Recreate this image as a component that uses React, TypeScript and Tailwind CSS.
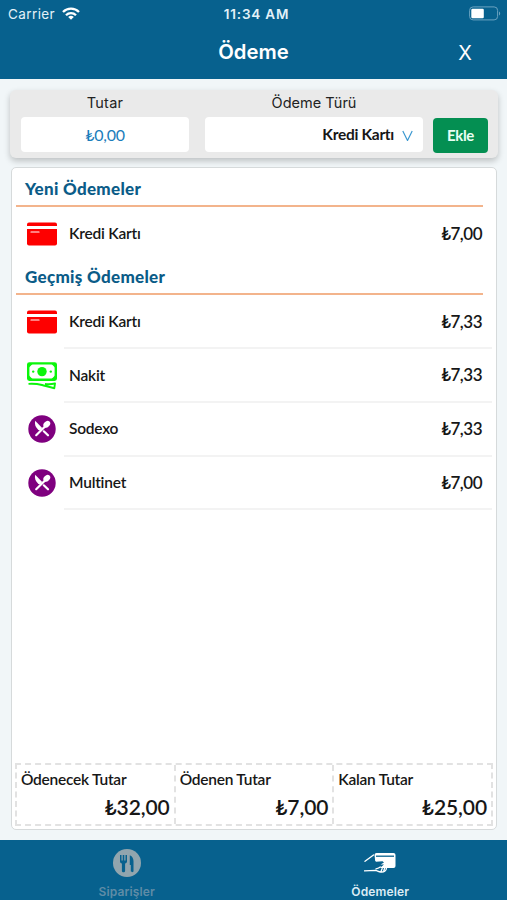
import React from "react";

type IconKind = "card" | "cash" | "meal";

interface Payment {
  name: string;
  amount: string;
  icon: IconKind;
}

const newPayments: Payment[] = [
  { name: "Kredi Kartı", amount: "7,00", icon: "card" },
];

const pastPayments: Payment[] = [
  { name: "Kredi Kartı", amount: "7,33", icon: "card" },
  { name: "Nakit", amount: "7,33", icon: "cash" },
  { name: "Sodexo", amount: "7,33", icon: "meal" },
  { name: "Multinet", amount: "7,00", icon: "meal" },
];

const totals = [
  { label: "Ödenecek Tutar", amount: "32,00" },
  { label: "Ödenen Tutar", amount: "7,00" },
  { label: "Kalan Tutar", amount: "25,00" },
];

const CardIcon = () => (
  <svg width="30" height="24" viewBox="0 0 30 24" fill="#fe0000">
    <path d="M2 0.5h26a2 2 0 0 1 2 2V4H0V2.500a2 2 0 0 1 2-2z" />
    <path d="M0 7h30v14.500a2 2 0 0 1-2 2H2a2 2 0 0 1-2-2z" />
    <path d="M4 10h8" stroke="#fff" strokeWidth="1.200" strokeLinecap="round" />
  </svg>
);

const CashIcon = () => (
  <svg width="30" height="28" viewBox="0 0 30 28" fill="none">
    <rect x="1.200" y="1.400" width="27.600" height="16.400" rx="1.200" stroke="#0bf50b" strokeWidth="2.400" />
    <path d="M2 2h3.500L2 5.500zM28 2h-3.500l3.500 3.500zM2 17v-3.500l3.500 3.500zM28 17v-3.500l-3.500 3.500z" fill="#0bf50b" />
    <circle cx="15" cy="9.600" r="4.700" fill="#0bf50b" />
    <circle cx="6.200" cy="9.600" r="1.200" fill="#0bf50b" />
    <circle cx="23.800" cy="9.600" r="1.200" fill="#0bf50b" />
    <path
      d="M1.500 21.900c5-.3 9.500.1 13.500 1.100 4.500 1.200 8 2.300 12.300 3.200l.7-4.800c-3.500 1-6.500 1-10 .6"
      stroke="#0bf50b"
      strokeWidth="1.900"
      strokeLinejoin="round"
    />
  </svg>
);

const MealIcon = () => (
  <svg width="28" height="28" viewBox="0 0 28 28">
    <circle cx="14" cy="14" r="13.700" fill="#7f007f" />
    <path d="M7.200 5.800l7 7.300-1.900 2.400-1.900-.6C7.400 12.200 6.400 9.500 7.200 5.800z" fill="#fff" />
    <path d="M15.800 16.300l4.200 4" stroke="#fff" strokeWidth="2.200" strokeLinecap="round" />
    <path d="M8.200 20.200L17.500 11" stroke="#fff" strokeWidth="2.200" strokeLinecap="round" />
    <ellipse cx="18.800" cy="9.200" rx="3.800" ry="2.900" transform="rotate(-45 18.800 9.200)" fill="#fff" />
  </svg>
);

const icons: Record<IconKind, React.FC> = {
  card: CardIcon,
  cash: CashIcon,
  meal: MealIcon,
};

const StatusBar = () => (
  <div className="h-7 px-2 flex items-center justify-between font-['Inter'] text-[13.500px] text-[#e3f1f8]">
    <div className="flex-1 flex items-center gap-[7px]">
      <span className="tracking-[0.400px]">Carrier</span>
      <svg className="-mt-0.5" width="18" height="13" viewBox="0 0 18 13" fill="none" stroke="#fff" strokeWidth="2.300">
        <path d="M1 5a11.300 11.300 0 0 1 16 0" />
        <path d="M4 8.200a7 7 0 0 1 10 0" />
        <path d="M6.200 10a4 4 0 0 1 5.600 0L9 12.800z" fill="#fff" stroke="none" />
      </svg>
    </div>
    <span className="relative left-[3px] font-semibold tracking-[0.800px]">11:34 AM</span>
    <div className="flex-1 -mt-0.5 flex justify-end">
      <svg className="-mr-[1.500px]" width="32" height="15" viewBox="0 0 32 15">
        <rect x="0.600" y="0.900" width="28" height="13" rx="3.500" fill="none" stroke="#6ba3c1" />
        <rect x="2.300" y="2.700" width="12.500" height="9.500" rx="1.200" fill="#fff" />
        <path d="M30 5.500c1.600.6 1.600 3.400 0 4z" fill="#6ba3c1" />
      </svg>
    </div>
  </div>
);

const SectionTitle = ({ children }: { children: React.ReactNode }) => (
  <div className="ml-1 mr-[13px] mb-px pl-[9px] pb-[5px] border-b-2 border-[#f3b48c] text-[17px] leading-[22px] font-black tracking-[0.300px] text-[#0b5c88]">
    {children}
  </div>
);

const PaymentRow = ({ payment, divider }: { payment: Payment; divider?: boolean }) => {
  const Icon = icons[payment.icon];

  return (
    <div className="h-[53.700px] pl-[15px] pr-1 flex">
      <div className="w-[37px] pb-px flex items-center">
        <div className="w-[30px] flex justify-center">
          <Icon />
        </div>
      </div>
      <div
        className={`flex-1 pl-[5px] pr-[10px] flex items-center justify-between border-b-2 ${
          divider ? "border-[#f3f3f3]" : "border-transparent"
        }`}
      >
        <span className="text-[15.500px] font-semibold tracking-[-0.220px]">{payment.name}</span>
        <span className="text-[17px] font-semibold tracking-[-0.500px]">₺{payment.amount}</span>
      </div>
    </div>
  );
};

export default function App() {
  return (
    <div className="h-[900px] w-[507px] flex flex-col overflow-hidden bg-[#f1f6f8] font-['Lato',sans-serif] text-[#171717] [font-variant-ligatures:none]">
      <header className="h-[79px] shrink-0 bg-[#07618e] text-white">
        <StatusBar />
        <div className="h-[49px] px-[35px] flex items-center font-['Inter']">
          <span className="flex-1" />
          <h1 className="text-[20.300px] font-semibold">Ödeme</h1>
          <span className="flex-1 text-right text-[20px]">X</span>
        </div>
      </header>

      {/* New payment form */}
      <div className="mt-[11px] ml-2.5 mr-[9px] h-[68px] shrink-0 pl-[11px] pr-2.5 flex rounded-md bg-[#eaeaea] shadow-[0_3px_6px_rgba(0,0,0,0.22)]">
        <div className="w-[168px] flex flex-col text-center">
          <label className="h-[27px] leading-[26px] text-[14.500px] tracking-[0.200px] font-['Inter'] text-[#222]">Tutar</label>
          <div className="h-[35px] leading-[35px] rounded-[4px] bg-white text-[16px] tracking-[-0.300px] text-[#1b7dbb]">
            ₺0,00
          </div>
        </div>
        <div className="ml-4 w-[218px] flex flex-col text-center">
          <label className="h-[27px] leading-[26px] text-[14.500px] font-['Inter'] text-[#222]">Ödeme Türü</label>
          <div className="h-[35px] pt-px pr-[10px] flex items-center justify-end gap-2 rounded-[4px] bg-white text-[15.500px] font-bold tracking-[-0.300px]">
            Kredi Kartı
            <svg width="11" height="11" viewBox="0 0 11 11" fill="none" stroke="#3b98d0" strokeWidth="1.200">
              <path d="M0.800 1L5.500 10.500L10.200 1" />
            </svg>
          </div>
        </div>
        <button className="ml-[10px] mt-7 w-[55px] h-[35px] rounded-[4px] bg-[#048f52] text-[15px] font-bold tracking-[-0.300px] text-[#e9fff4]">
          Ekle
        </button>
      </div>

      {/* Payment list */}
      <main className="mt-[9px] ml-[11px] mr-2.5 h-[663px] shrink-0 pt-2.5 flex flex-col rounded-[5px] border border-[#d6dadb] bg-white">
        <SectionTitle>Yeni Ödemeler</SectionTitle>
        {newPayments.map((payment) => (
          <PaymentRow key={payment.name} payment={payment} />
        ))}
        <div className="mt-[4px]">
          <SectionTitle>Geçmiş Ödemeler</SectionTitle>
        </div>
        {pastPayments.map((payment) => (
          <PaymentRow key={payment.name} payment={payment} divider />
        ))}

        <div className="mt-auto mb-[3px] mx-[3px] h-[63px] flex border-2 border-dashed border-[#e2e2e2]">
          {totals.map((total) => (
            <div
              key={total.label}
              className="flex-1 pl-1 pr-[4px] pt-[3px] border-r-2 border-dashed border-[#e2e2e2] last:border-r-0"
            >
              <div className="text-[15.500px] leading-[22px] font-semibold tracking-[-0.250px]">{total.label}</div>
              <div className="mt-[3px] text-right text-[21px] leading-[28px] font-semibold tracking-[-0.100px]">
                ₺{total.amount}
              </div>
            </div>
          ))}
        </div>
      </main>

      <nav className="mt-auto h-[60px] shrink-0 flex bg-[#07618e] text-[12px] font-semibold font-['Inter']">
        <div className="flex-1 pt-[9px] flex flex-col items-center text-[#5f8ca6]">
          <svg width="28" height="28" viewBox="0 0 28 28">
            <circle cx="14" cy="14" r="14" fill="#91a5ae" />
            <g fill="#07618e">
              <path d="M7 6h1.500v5.500h1.200V6h1.600v5.500h1.200V6H14v6.500c0 1-.8 1.700-1.900 2V22c0 1.700-3.200 1.700-3.200 0v-7.500C7.700 14.200 7 13.500 7 12.500z" />
              <path d="M16.800 6.200c2.700 1.200 3.700 3.500 3.700 6V22c0 1.600-2.700 1.600-2.700 0v-6h-1z" />
            </g>
          </svg>
          <span className="mt-[7px] leading-4 tracking-[0.150px]">Siparişler</span>
        </div>
        <div className="flex-1 pt-[12px] flex flex-col items-center text-[#dcecf5]">
          <svg width="32" height="21" viewBox="0 0 32 21" fill="none" strokeLinecap="round" strokeLinejoin="round">
            <path d="M10.500 3Q10.500 1 12.500 1H29.500Q31.500 1 31.500 3V14Q31.500 16 29.500 16H12z" fill="#fff" />
            <path d="M12 4.200h18" stroke="#07618e" strokeWidth="1.300" strokeLinecap="butt" />
            {/* hand over the card */}
            <path d="M3 11L9.500 7.500L12 9.700L18.500 9.200L20 10.500L16.500 12.500H20L16.500 15.500L10.500 16.500L2 16z" fill="#07618e" />
            <path d="M1 9.300L9.500 3M0.500 18.800l11-.5c2 .3 3 1.800 5.500 1.700 3 .2 5.300-.9 5.500-4M12 16.800c2-.4 3.500-1 4.300-1.900M17 19.500l1.200-3M19.800 18.800l.8-2.600" stroke="#fff" strokeWidth="1.300" />
          </svg>
          <span className="mt-[11px] leading-4 tracking-[0.150px]">Ödemeler</span>
        </div>
      </nav>
    </div>
  );
}
